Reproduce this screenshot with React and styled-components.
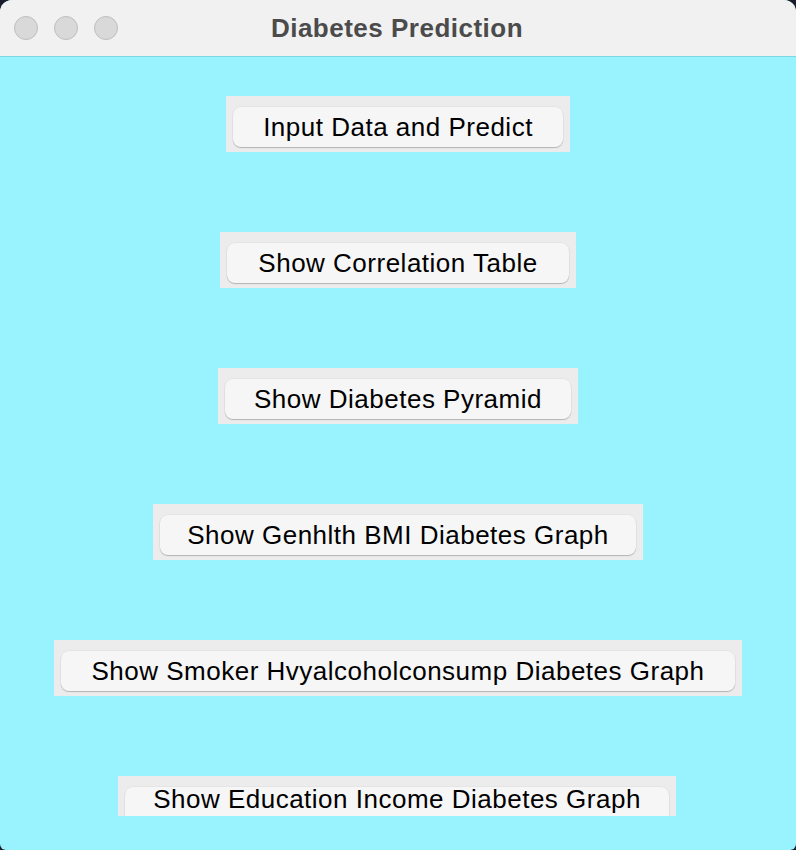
import React from 'react';
import styled, { createGlobalStyle } from 'styled-components';

const GlobalStyle = createGlobalStyle`
  html, body {
    margin: 0;
    padding: 0;
    background: #1c1d2b;
  }
  body {
    font-family: "Liberation Sans", Arial, sans-serif;
  }
`;

const Window = styled.div`
  width: 796px;
  height: 850px;
  border-radius: 12px 12px 6px 6px;
  overflow: hidden;
  display: flex;
  flex-direction: column;
  background: #98f3fe;
`;

const TitleBar = styled.div`
  height: 57px;
  flex: none;
  background: #f0f1f0;
  border-bottom: 1px solid #7ed6df;
  box-sizing: border-box;
  position: relative;
  display: flex;
  align-items: center;
  justify-content: center;
`;

const Lights = styled.div`
  position: absolute;
  left: 14px;
  top: 16px;
  display: flex;
  gap: 16px;
`;

const Light = styled.span`
  width: 24px;
  height: 24px;
  border-radius: 50%;
  background: #d9d9d9;
  border: 1px solid #bdbdbd;
  box-sizing: border-box;
`;

const Title = styled.div`
  font-family: "Liberation Sans", Arial, sans-serif;
  font-weight: bold;
  font-size: 26px;
  letter-spacing: 0.5px;
  color: #4b4b4b;
  margin-left: -2px;
`;

const Content = styled.div`
  flex: 1;
  display: flex;
  flex-direction: column;
  align-items: center;
  padding-top: 39px;
  gap: 80px;
  overflow: hidden;
`;

const Frame = styled.div`
  background: #ececec;
  padding: 11px 7px 5px 7px;
  height: ${(p) => (p.$clipped ? '40px' : 'auto')};
  overflow: hidden;
  box-sizing: border-box;
  margin-left: ${(p) => (p.$clipped ? '-2px' : '0')};
`;

const Button = styled.button`
  display: flex;
  justify-content: center;
  align-items: ${(p) => (p.$clipped ? 'flex-start' : 'center')};
  width: ${(p) => p.$w}px;
  height: 40px;
  border: none;
  border-radius: 8px;
  background: #f6f6f6;
  box-shadow: 0 1px 1px rgba(0, 0, 0, 0.22), 0 0 0 0.5px rgba(0, 0, 0, 0.06);
  font-family: "Liberation Sans", Arial, sans-serif;
  font-size: 26px;
  line-height: ${(p) => (p.$clipped ? '24px' : '30px')};
  letter-spacing: 0.5px;
  color: #000;
  padding: 0;
  cursor: pointer;
`;

const buttons = [
  { label: 'Input Data and Predict', w: 330 },
  { label: 'Show Correlation Table', w: 342 },
  { label: 'Show Diabetes Pyramid', w: 346 },
  { label: 'Show Genhlth BMI Diabetes Graph', w: 476 },
  { label: 'Show Smoker Hvyalcoholconsump Diabetes Graph', w: 674 },
  { label: 'Show Education Income Diabetes Graph', w: 544, clipped: true },
];

export default function App() {
  return (
    <>
      <GlobalStyle />
      <Window>
        <TitleBar>
          <Lights>
            <Light />
            <Light />
            <Light />
          </Lights>
          <Title>Diabetes Prediction</Title>
        </TitleBar>
        <Content>
          {buttons.map((b) => (
            <Frame key={b.label} $clipped={b.clipped}>
              <Button $w={b.w} $clipped={b.clipped}>{b.label}</Button>
            </Frame>
          ))}
        </Content>
      </Window>
    </>
  );
}
